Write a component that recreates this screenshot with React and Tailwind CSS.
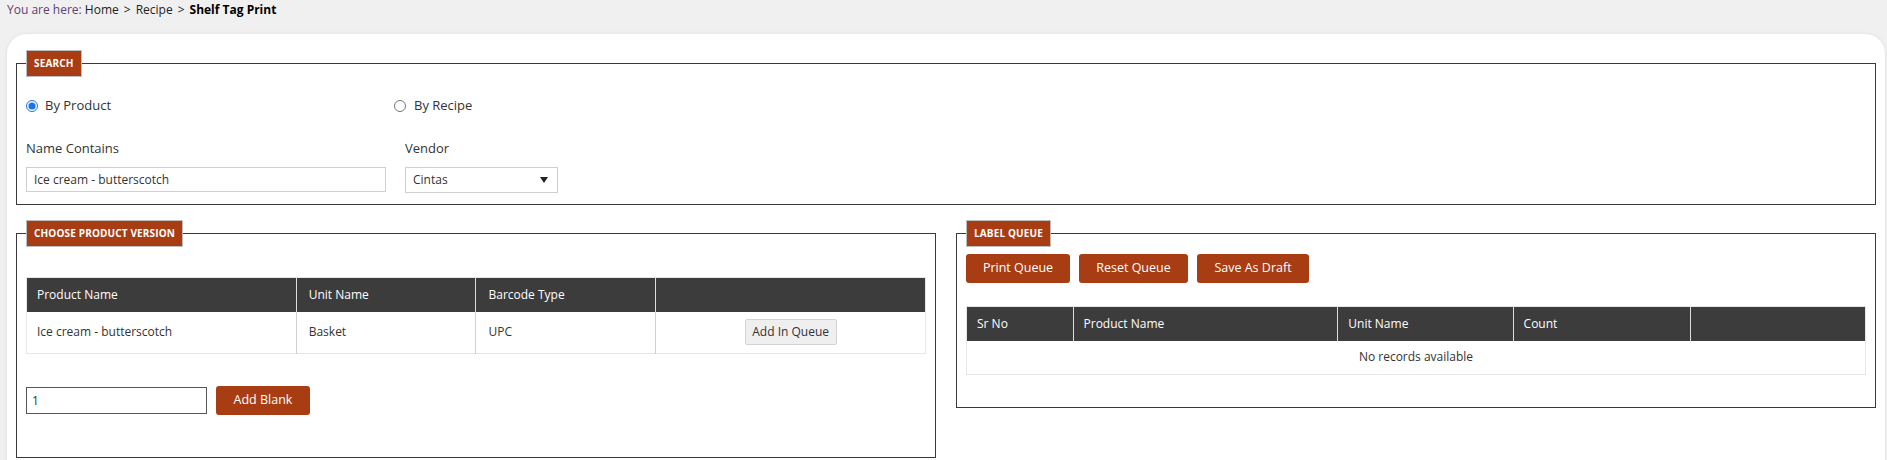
import React, { useState } from "react";

const RUST = "bg-[#a83c13]";

// Boxed section with the rust-coloured tag sitting on the top border
const Section = ({ title, className = "", children }) => (
  <fieldset className={`border border-[#3a3a3a] px-[9px] ${className}`}>
    <legend
      className={`${RUST} border border-[#bdbdbd] h-[27px] px-[7px] text-[10px] font-bold text-white leading-[25px] tracking-[0.15px]`}
    >
      {title}
    </legend>
    {children}
  </fieldset>
);

const RustButton = ({ children, className = "" }) => (
  <button
    className={`${RUST} h-[29px] rounded-[3px] text-white text-[12.5px] leading-none ${className}`}
  >
    {children}
  </button>
);

const productRows = [
  { name: "Ice cream - butterscotch", unit: "Basket", barcode: "UPC" },
];

const queueCols = [
  { label: "Sr No", w: "w-[11.85%]" },
  { label: "Product Name", w: "w-[29.45%]" },
  { label: "Unit Name", w: "w-[19.5%]" },
  { label: "Count", w: "w-[19.7%]" },
  { label: "", w: "w-[19.5%]" },
];

const App = () => {
  const [mode, setMode] = useState("product");

  return (
    <div className="min-h-screen bg-[#f0f0f0] font-['Open_Sans',sans-serif] text-[#333]">
      {/* Breadcrumb */}
      <div className="h-[20px] pl-[7px] text-[12px] leading-[20px]">
        <span className="text-[#5c4470]">You are here: </span>
        <span className="text-[#222]">Home</span>
        <span className="text-[#222] mx-[5px]">&gt;</span>
        <span className="text-[#222]">Recipe</span>
        <span className="text-[#222] mx-[5px]">&gt;</span>
        <span className="font-bold text-black">Shelf Tag Print</span>
      </div>

      <div className="mt-[14px] ml-[7px] mr-[2px] bg-white rounded-t-[20px] shadow-[0_0_4px_rgba(0,0,0,0.07)] px-[9px] pt-[16px] pb-[20px]">
        {/* Search */}
        <Section title="SEARCH" className="pb-[11px]">
          <div className="flex items-center h-[20px] mt-[19px] text-[13px]">
            <label className="flex items-center w-[368px] cursor-pointer">
              <input
                type="radio"
                name="mode"
                checked={mode === "product"}
                onChange={() => setMode("product")}
                className="w-[12px] h-[12px] m-0 accent-[#1a73e8]"
              />
              <span className="ml-[7px]">By Product</span>
            </label>
            <label className="flex items-center cursor-pointer">
              <input
                type="radio"
                name="mode"
                checked={mode === "recipe"}
                onChange={() => setMode("recipe")}
                className="w-[12px] h-[12px] m-0 accent-[#1a73e8]"
              />
              <span className="ml-[8px]">By Recipe</span>
            </label>
          </div>

          <div className="flex mt-[23px] text-[13px]">
            <div className="w-[379px]">
              <div className="h-[18px] leading-[18px]">Name Contains</div>
              <input
                defaultValue="Ice cream - butterscotch"
                className="mt-[10px] w-[360px] h-[25px] border border-[#cfcfcf] px-[7px] text-[12px] outline-none"
              />
            </div>
            <div>
              <div className="h-[18px] leading-[18px]">Vendor</div>
              <div className="mt-[10px] w-[153px] h-[26px] border border-[#cfcfcf] flex items-center justify-between pl-[7px] pr-[9px] text-[12px]">
                <span>Cintas</span>
                <svg width="8" height="6" viewBox="0 0 8 6">
                  <path d="M0 0h8L4 6z" fill="#222" />
                </svg>
              </div>
            </div>
          </div>
        </Section>

        <div className="grid grid-cols-2 gap-[20px] mt-[15px] items-start">
          {/* Product versions */}
          <Section title="CHOOSE PRODUCT VERSION" className="pb-[42px]">
            <table className="w-full mt-[30px] border border-[#e6e6e6] border-collapse text-[12px]">
              <thead>
                <tr className="bg-[#3c3c3c] text-white h-[34px]">
                  <th className="w-[30%] text-left font-normal pl-[10px] border-r border-[#dcdcdc]">Product Name</th>
                  <th className="w-[20%] text-left font-normal pl-[12px] border-r border-[#dcdcdc]">Unit Name</th>
                  <th className="w-[20%] text-left font-normal pl-[12px] border-r border-[#dcdcdc]">Barcode Type</th>
                  <th className="w-[30%]" />
                </tr>
              </thead>
              <tbody>
                {productRows.map((row, idx) => (
                  <tr key={idx} className="h-[42px]">
                    <td className="pl-[10px] border-r border-[#cfcfcf]">{row.name}</td>
                    <td className="pl-[12px] border-r border-[#cfcfcf]">{row.unit}</td>
                    <td className="pl-[12px] border-r border-[#cfcfcf]">{row.barcode}</td>
                    <td className="text-center">
                      <button className="h-[26px] w-[92px] bg-[#efefef] border border-[#d3d3d3] rounded-[2px] text-[12px] text-[#333]">
                        Add In Queue
                      </button>
                    </td>
                  </tr>
                ))}
              </tbody>
            </table>

            <div className="flex items-center gap-[9px] mt-[32px]">
              <input
                defaultValue="1"
                className="w-[181px] h-[27px] border border-[#555] px-[5px] text-[12px] outline-none"
              />
              <RustButton className="w-[94px]">Add Blank</RustButton>
            </div>
          </Section>

          {/* Label queue */}
          <Section title="LABEL QUEUE" className="pb-[32px]">
            <div className="flex gap-[9px] mt-[7px]">
              <RustButton className="w-[104px]">Print Queue</RustButton>
              <RustButton className="w-[109px]">Reset Queue</RustButton>
              <RustButton className="w-[112px]">Save As Draft</RustButton>
            </div>

            <table className="w-full mt-[23px] border border-[#e6e6e6] border-collapse text-[12px]">
              <thead>
                <tr className="bg-[#3c3c3c] text-white h-[34px]">
                  {queueCols.map((col, idx) => (
                    <th
                      key={idx}
                      className={`${col.w} text-left font-normal pl-[10px] ${
                        idx < queueCols.length - 1 ? "border-r border-[#dcdcdc]" : ""
                      }`}
                    >
                      {col.label}
                    </th>
                  ))}
                </tr>
              </thead>
              <tbody>
                <tr className="h-[34px]">
                  <td colSpan={5} className="text-center">
                    No records available
                  </td>
                </tr>
              </tbody>
            </table>
          </Section>
        </div>
      </div>
    </div>
  );
};

export default App;
